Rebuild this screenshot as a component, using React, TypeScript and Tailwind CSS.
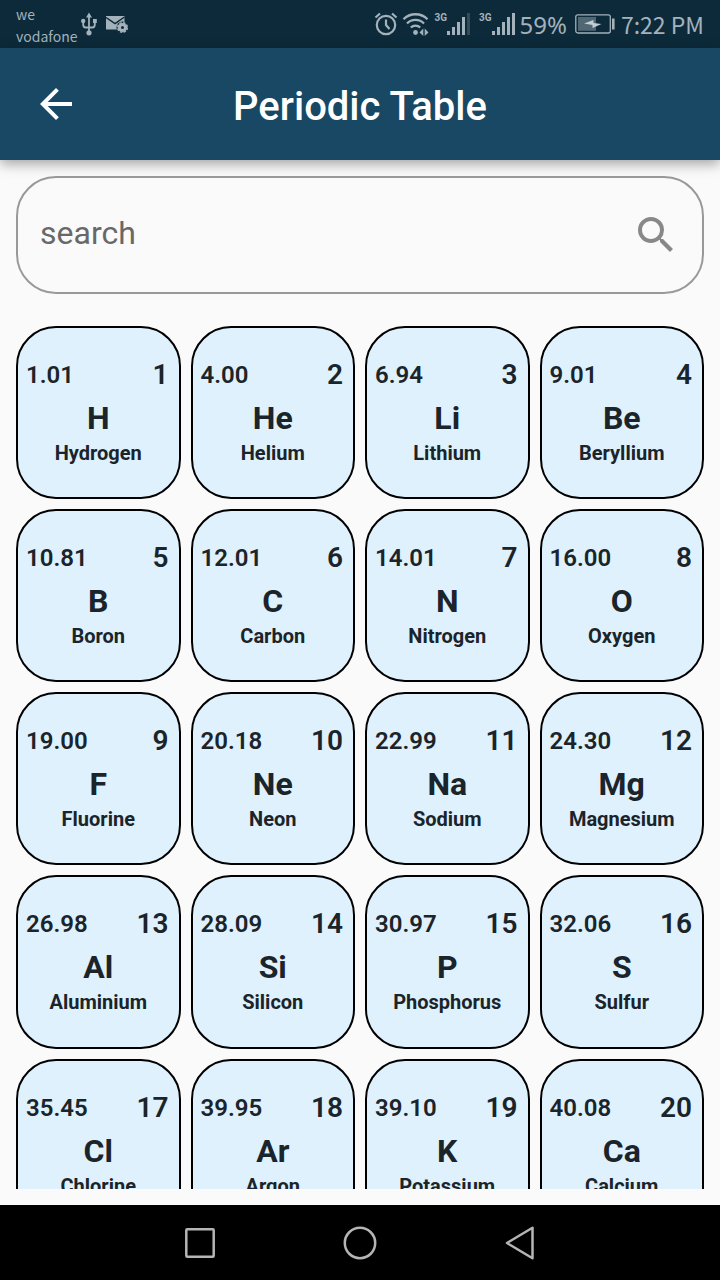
import React from "react";

type ChemicalElement = {
  number: number;
  symbol: string;
  name: string;
  mass: string;
};

const elements: ChemicalElement[] = [
  { number: 1, symbol: "H", name: "Hydrogen", mass: "1.01" },
  { number: 2, symbol: "He", name: "Helium", mass: "4.00" },
  { number: 3, symbol: "Li", name: "Lithium", mass: "6.94" },
  { number: 4, symbol: "Be", name: "Beryllium", mass: "9.01" },
  { number: 5, symbol: "B", name: "Boron", mass: "10.81" },
  { number: 6, symbol: "C", name: "Carbon", mass: "12.01" },
  { number: 7, symbol: "N", name: "Nitrogen", mass: "14.01" },
  { number: 8, symbol: "O", name: "Oxygen", mass: "16.00" },
  { number: 9, symbol: "F", name: "Fluorine", mass: "19.00" },
  { number: 10, symbol: "Ne", name: "Neon", mass: "20.18" },
  { number: 11, symbol: "Na", name: "Sodium", mass: "22.99" },
  { number: 12, symbol: "Mg", name: "Magnesium", mass: "24.30" },
  { number: 13, symbol: "Al", name: "Aluminium", mass: "26.98" },
  { number: 14, symbol: "Si", name: "Silicon", mass: "28.09" },
  { number: 15, symbol: "P", name: "Phosphorus", mass: "30.97" },
  { number: 16, symbol: "S", name: "Sulfur", mass: "32.06" },
  { number: 17, symbol: "Cl", name: "Chlorine", mass: "35.45" },
  { number: 18, symbol: "Ar", name: "Argon", mass: "39.95" },
  { number: 19, symbol: "K", name: "Potassium", mass: "39.10" },
  { number: 20, symbol: "Ca", name: "Calcium", mass: "40.08" },
];

function UsbIcon() {
  return (
    <svg className="h-6 w-4" viewBox="0 0 16 24" fill="none" stroke="currentColor" strokeWidth="1.8">
      <path d="M8 4v16M2.200 9v3.500c0 1.500 1 3 2.500 3H8M13.800 9v3.500c0 1.500-1 3-2.500 3H8" />
      <path d="M8 0.500 11 5.500H5zM12 7h3.800v4H12z" fill="currentColor" stroke="none" />
      <circle cx="2.200" cy="9" r="2.200" fill="currentColor" stroke="none" />
      <circle cx="8" cy="20.800" r="2.600" fill="currentColor" stroke="none" />
    </svg>
  );
}

function MailSettingsIcon() {
  return (
    <svg className="h-5 w-6" viewBox="0 0 24 20">
      <path d="M1 2h18.500v13.500H1z" fill="currentColor" />
      <path d="M1 3.500 10 9.500 19.500 3" fill="none" stroke="#0d2a3a" strokeWidth="1.500" />
      <circle cx="17.500" cy="13.500" r="6" fill="#0d2a3a" />
      <circle cx="17.500" cy="13.500" r="4.600" fill="currentColor" />
      <circle cx="17.500" cy="13.500" r="4.800" fill="none" stroke="currentColor" strokeWidth="1.600" strokeDasharray="2.400 1.370" />
      <circle cx="17.500" cy="13.500" r="1.500" fill="#0d2a3a" />
    </svg>
  );
}

function AlarmIcon() {
  return (
    <svg className="h-6 w-6" viewBox="0 0 24 24" fill="none" stroke="currentColor" strokeWidth="2.200">
      <circle cx="12" cy="13" r="9.200" />
      <path d="M12 7.500V13l3.500 4M1.500 5.500 6 1.500M22.500 5.500 18 1.500" />
    </svg>
  );
}

function WifiIcon() {
  return (
    <svg className="h-6 w-7" viewBox="0 0 28 24" fill="none" stroke="currentColor" strokeWidth="2.300">
      <path d="M1.500 7.200a17 17 0 0 1 24 0M5 11.500a12 12 0 0 1 17 0M8.800 15.500a6.600 6.600 0 0 1 9.400 0" />
      <circle cx="13.500" cy="20.500" r="2.400" fill="currentColor" stroke="none" />
      <path d="M21.300 16.500v7.500l-3.800-3.600zM22.700 16.500v7.500l3.800-3.600z" fill="currentColor" stroke="none" />
    </svg>
  );
}

function SignalIcon({ full = false }: { full?: boolean }) {
  return (
    <span className="flex items-start">
      <span className="font-['Roboto',sans-serif] text-[10px] leading-3 font-bold">3G</span>
      <svg className="h-6 w-6" viewBox="0 0 24 24" fill="currentColor">
        <path d="M0 19h3v4H0zM5 15h3v8H5zM10 10h3v13h-3zM15 5h3v18h-3z" />
        <path d="M20 1h3v22h-3z" opacity={full ? 1 : 0.25} />
      </svg>
    </span>
  );
}

function BatteryIcon() {
  return (
    <svg className="h-5 w-10" viewBox="0 0 40 20">
      <rect x="0.800" y="0.800" width="34.500" height="18.200" rx="2" fill="none" stroke="currentColor" strokeWidth="1.300" />
      <path d="M3 3h18v13.800H3z" fill="currentColor" opacity="0.450" />
      <path d="M9 9.500 18.500 6v3l8 1-9 4v-3z" fill="#c3ced4" />
      <path d="M37 4.500h2.600v11H37z" fill="currentColor" />
    </svg>
  );
}

function StatusBar() {
  return (
    <div className="flex h-12 shrink-0 items-center justify-between bg-[#0d2a3a] px-4 font-['Noto_Sans',sans-serif] text-[#a3b2bb]">
      <div className="flex items-center">
        <p className="pt-0.5 font-['Noto_Sans_CJK_SC',sans-serif] text-sm leading-[22px]">
          we
          <br />
          vodafone
        </p>
        <span className="ml-1">
          <UsbIcon />
        </span>
        <span className="ml-2">
          <MailSettingsIcon />
        </span>
      </div>
      <div className="flex items-center">
        <AlarmIcon />
        <span className="ml-1">
          <WifiIcon />
        </span>
        <span className="ml-1">
          <SignalIcon />
        </span>
        <span className="ml-2">
          <SignalIcon full />
        </span>
        <span className="ml-1 pt-0.5 text-2xl leading-8">59%</span>
        <span className="ml-2">
          <BatteryIcon />
        </span>
        <span className="ml-1.5 font-['Noto_Sans_CJK_SC',sans-serif] text-[23px] leading-8">7:22 PM</span>
      </div>
    </div>
  );
}

function AppBar() {
  return (
    <header className="relative z-10 grid h-28 shrink-0 grid-cols-[80px_1fr_80px] items-center bg-[#184863] px-4 text-white shadow-[0_4px_12px_rgba(0,0,0,0.35)]">
      <button type="button" aria-label="Back" className="flex size-20 items-center justify-center">
        <svg className="size-12" viewBox="0 0 24 24" fill="currentColor">
          <path d="M20 11H7.830l5.590-5.590L12 4l-8 8 8 8 1.410-1.410L7.830 13H20v-2z" />
        </svg>
      </button>
      <h1 className="pt-1.5 text-center text-[40px] leading-12 font-medium">Periodic Table</h1>
    </header>
  );
}

function SearchField() {
  return (
    <label className="flex h-[118px] shrink-0 items-center rounded-[40px] border-2 border-[#999999] px-[22px]">
      <input
        type="text"
        aria-label="Search elements"
        placeholder="search"
        className="min-w-0 flex-1 bg-transparent pb-1 text-[32px] leading-10 text-[#212121] outline-none placeholder:text-[#686868]"
      />
      <svg className="size-12" viewBox="0 0 24 24" fill="#888888">
        <path d="M15.500 14h-.79l-.28-.27A6.471 6.471 0 0 0 16 9.500 6.500 6.500 0 1 0 9.500 16c1.610 0 3.090-.59 4.230-1.570l.27.28v.79l5 4.990L20.490 19l-4.990-5zm-6 0C7.010 14 5 11.990 5 9.500S7.010 5 9.500 5 14 7.010 14 9.500 11.990 14 9.500 14z" />
      </svg>
    </label>
  );
}

function ElementCard({ element }: { element: ChemicalElement }) {
  return (
    <li className="aspect-[19/20] rounded-[40px] border-2 border-black bg-[#def1fd] pt-[29px] text-center font-bold text-[#1b242a]">
      <div className="flex h-9 items-center justify-between pr-[10px] pl-2">
        <span className="text-2xl font-semibold">{element.mass}</span>
        <span className="text-[28px] font-semibold">{element.number}</span>
      </div>
      <h2 className="text-[32px] leading-[50px]">{element.symbol}</h2>
      <p className="text-xl leading-5">{element.name}</p>
    </li>
  );
}

function NavigationBar() {
  return (
    <nav className="flex h-[75px] shrink-0 items-center justify-center gap-28 bg-black text-[#b5b5b5]">
      <button type="button" aria-label="Recent apps" className="flex size-12 items-center justify-center">
        <svg className="size-9" viewBox="0 0 36 36" fill="none" stroke="currentColor" strokeWidth="2.500">
          <rect x="4.300" y="4.300" width="27.400" height="27.400" rx="1" />
        </svg>
      </button>
      <button type="button" aria-label="Home" className="flex size-12 items-center justify-center">
        <svg className="size-9" viewBox="0 0 36 36" fill="none" stroke="currentColor" strokeWidth="2.500">
          <circle cx="18" cy="18" r="15.200" />
        </svg>
      </button>
      <button type="button" aria-label="Back" className="flex size-12 items-center justify-center">
        <svg className="size-9" viewBox="0 0 36 36" fill="none" stroke="currentColor" strokeWidth="2.500" strokeLinejoin="round">
          <path d="M30.500 2.700v30.600L5 18z" />
        </svg>
      </button>
    </nav>
  );
}

export default function App() {
  return (
    <div className="flex h-screen flex-col bg-[#fafafa] font-['Roboto',sans-serif]">
      <StatusBar />
      <AppBar />
      <main className="flex min-h-0 flex-1 flex-col gap-8 p-4">
        <SearchField />
        <ul className="grid min-h-0 flex-1 auto-rows-max grid-cols-4 gap-[10px] overflow-y-auto [scrollbar-width:none]">
          {elements.map((element) => (
            <ElementCard key={element.number} element={element} />
          ))}
        </ul>
      </main>
      <NavigationBar />
    </div>
  );
}
